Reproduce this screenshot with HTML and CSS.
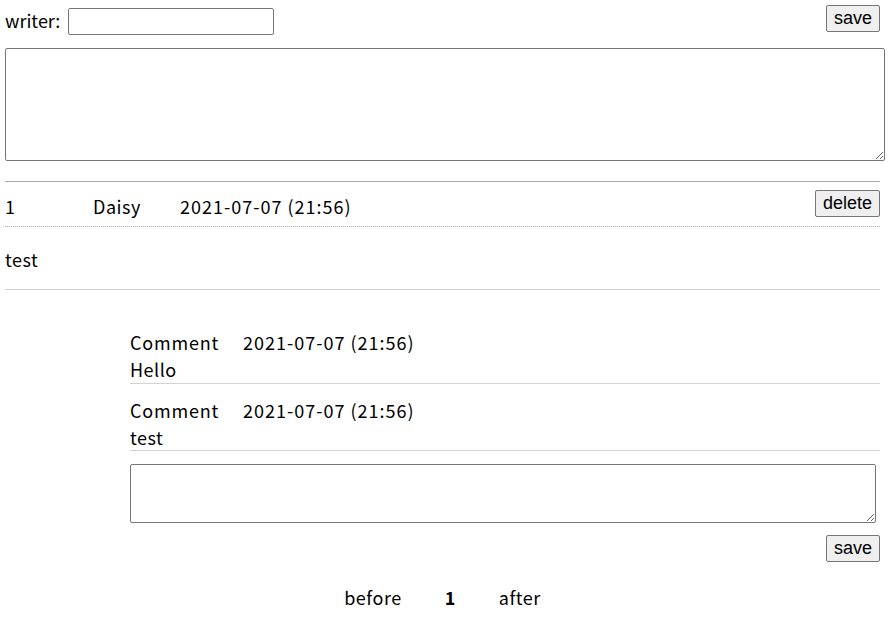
FILE: index.html
```html
<!DOCTYPE html>
<html>
<head>
<meta charset="utf-8">
<link rel="stylesheet" href="styles.css">
</head>
<body>
<div class="page">
  <div class="top-row">
    <label class="writer">writer: <input class="writer-input" type="text"></label>
    <button class="btn">save</button>
  </div>
  <textarea class="main-text"></textarea>

  <div class="post">
    <div class="post-head">
      <span class="col-no">1</span>
      <span class="col-name">Daisy</span>
      <span class="col-date date">2021-07-07 (21:56)</span>
      <button class="btn btn-del">delete</button>
    </div>
    <div class="post-body">test</div>
  </div>

  <div class="comments">
    <div class="comment">
      <div class="comment-head"><span class="c-name">Comment</span><span class="date">2021-07-07 (21:56)</span></div>
      <div>Hello</div>
    </div>
    <div class="comment">
      <div class="comment-head"><span class="c-name">Comment</span><span class="date">2021-07-07 (21:56)</span></div>
      <div>test</div>
    </div>
    <textarea class="comment-text"></textarea>
    <div class="comment-actions"><button class="btn">save</button></div>
  </div>

  <div class="pager">
    <span>before</span>
    <span class="current">1</span>
    <span>after</span>
  </div>
</div>
</body>
</html>
```

FILE: styles.css
```css
html, body {
  margin: 0;
  padding: 0;
  background: #fff;
}
body {
  font-family: "Noto Sans CJK KR", "Noto Sans", sans-serif;
  font-size: 18px;
  color: #000;
  letter-spacing: 0.5px;
}
.date {
  letter-spacing: 1px;
}
.page {
  width: 875px;
  padding: 5px 0 0 5px;
}
.top-row {
  display: flex;
  justify-content: space-between;
  align-items: flex-start;
  height: 35px;
}
.writer {
  display: flex;
  align-items: center;
  gap: 8px;
  height: 30px;
  line-height: 27px;
  letter-spacing: 0;
}
.writer-input {
  align-self: flex-end;
  width: 206px;
  height: 27px;
  box-sizing: border-box;
  border: 1px solid #767676;
  border-radius: 2px;
  margin: 0;
  padding: 1px 2px;
}
.btn {
  font-family: "Liberation Sans", Arial, sans-serif;
  font-size: 18px;
  letter-spacing: 0;
  height: 27px;
  box-sizing: border-box;
  padding: 0 7px;
  margin: 0;
  background: #efefef;
  border: 1px solid #767676;
  border-radius: 2px;
  color: #000;
  line-height: 23px;
}
.main-text {
  display: block;
  width: 880px;
  height: 113px;
  box-sizing: border-box;
  margin: 8px 0 0 0;
  border: 1px solid #767676;
  border-radius: 2px;
  resize: vertical;
}
.post {
  margin-top: 20px;
  border-top: 1px solid #a9a9a9;
  border-bottom: 1px solid #d3d3d3;
}
.post-head {
  display: flex;
  align-items: center;
  height: 44px;
  border-bottom: 1px dotted #b0b0b0;
}
.post-head span {
  padding-top: 4px;
}
.btn-del {
  margin-top: -1px;
}
.col-no {
  width: 88px;
}
.col-name {
  width: 87px;
}
.col-date {
  flex: 1;
}
.post-body {
  height: 62px;
  padding-top: 2px;
  box-sizing: border-box;
  display: flex;
  align-items: center;
}
.comments {
  margin: 25px 0 0 125px;
}
.comment {
  padding-top: 14px;
  line-height: 27px;
  height: 54px;
  border-bottom: 1px solid #d3d3d3;
}
.comment + .comment {
  padding-top: 13px;
  height: 53px;
}
.c-name {
  display: inline-block;
  width: 113px;
  letter-spacing: 0.8px;
}
.comment-text {
  display: block;
  width: 746px;
  height: 59px;
  box-sizing: border-box;
  margin: 13px 0 0 0;
  border: 1px solid #767676;
  border-radius: 2px;
  resize: vertical;
}
.comment-actions {
  display: flex;
  justify-content: flex-end;
  margin-top: 12px;
}
.pager {
  display: flex;
  justify-content: center;
  gap: 43px;
  margin-top: 21px;
  line-height: 28px;
}
.current {
  font-weight: bold;
}
```
